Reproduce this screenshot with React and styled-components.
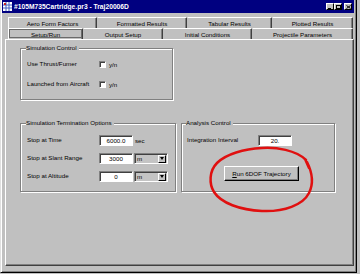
import React from 'react';
import styled, { createGlobalStyle } from 'styled-components';

const GlobalStyle = createGlobalStyle`
  html, body {
    margin: 0;
    padding: 0;
    background: #c0c0c0;
  }
  body {
    font-family: "Liberation Sans", Arial, sans-serif;
    font-size: 6.2px;
    color: #000;
  }
`

const Screen = styled.div`
  position: relative;
  width: 360px;
  height: 274px;
  overflow: hidden;
`

const Window = styled.div`
  width: 357px;
  height: 273px;
  box-sizing: border-box;
  background: #c0c0c0;
  border-left: 1px solid #dfdfdf;
  border-right: 1px solid #000;
  border-bottom: 1px solid #000;
  box-shadow: inset 1px 0 0 #fff, inset -1px -1px 0 #808080;
  padding: 0 2px 0 1px;
  display: flex;
  flex-direction: column;
`

const TitleBar = styled.div`
  height: 13px;
  flex: none;
  background: #000080;
  color: #fff;
  display: flex;
  align-items: center;
  padding: 0 2px 0 1px;
  gap: 2px;
`

const TitleText = styled.span`
  flex: 1;
  font-weight: bold;
  font-size: 6.7px;
  white-space: nowrap;
`

const CaptionButtons = styled.div`
  display: flex;
  align-items: center;
`

const CaptionButton = styled.div`
  width: 8px;
  height: 7px;
  box-sizing: border-box;
  background: #c0c0c0;
  border: 1px solid;
  border-color: #fff #000 #000 #fff;
  margin-left: ${p => p.$gap || 0}px;
  display: flex;
  align-items: center;
  justify-content: center;
`

const Body = styled.div`
  flex: 1;
  display: flex;
  flex-direction: column;
  padding: 4px 0 6px 3px;
`

const TabRow = styled.div`
  display: flex;
  margin-left: 3px;
  width: 345px;
`

const Tab = styled.div`
  width: ${p => p.$w}px;
  height: 11px;
  box-sizing: border-box;
  border-top: 1px solid #fff;
  border-left: 1px solid ${p => (p.$first ? '#fff' : '#c0c0c0')};
  border-right: 1px solid #404040;
  box-shadow: inset -1px 0 0 #808080;
  border-radius: 1px 1px 0 0;
  display: flex;
  align-items: center;
  justify-content: center;
  white-space: nowrap;
  ${p => p.$active && `
    border-left-color: #fff;
    outline: 1px solid #6a6a6a;
    outline-offset: -2px;
  `}
`

const Panel = styled.div`
  flex: 1;
  box-sizing: border-box;
  border: 1px solid;
  border-color: #fff #404040 #404040 #fff;
  box-shadow: inset -1px -1px 0 #808080;
  padding: 4px 0 0 14px;
  display: flex;
  flex-direction: column;
  gap: 19px;
`

const Group = styled.fieldset`
  margin: 0;
  width: ${p => p.$w}px;
  box-sizing: border-box;
  border: 1px solid #808080;
  box-shadow: inset 1px 1px 0 #fff, 1px 1px 0 #fff;
  padding: ${p => p.$pad};
  display: flex;
  flex-direction: column;
  gap: ${p => p.$gap || 0}px;
`

const Legend = styled.legend`
  padding: 0 2px 0 0;
  margin-left: -1px;
  line-height: 8px;
  background: #c0c0c0;
  white-space: nowrap;
`

const BottomRow = styled.div`
  display: flex;
  gap: 5px;
  align-items: stretch;
`

const Row = styled.div`
  display: flex;
  align-items: center;
  height: 11px;
`

const Label = styled.span`
  width: ${p => p.$w}px;
  flex: none;
  white-space: nowrap;
  margin-top: -2px;
`

const CheckBox = styled.span`
  width: 7px;
  height: 7px;
  box-sizing: border-box;
  background: #fff;
  border: 1px solid;
  border-color: #808080 #fff #fff #808080;
  box-shadow: inset 1px 1px 0 #404040;
`

const Hint = styled.span`
  margin-left: 3px;
`

const Field = styled.span`
  width: 34px;
  height: 11px;
  box-sizing: border-box;
  background: #fff;
  border: 1px solid;
  border-color: #808080 #fff #fff #808080;
  box-shadow: inset 1px 1px 0 #404040;
  display: flex;
  align-items: center;
  justify-content: center;
`

const Unit = styled.span`
  margin-left: 2px;
`

const Select = styled.span`
  width: 34px;
  height: 11px;
  margin-left: 1px;
  box-sizing: border-box;
  background: #c4c4c4;
  border: 1px solid;
  border-color: #808080 #fff #fff #808080;
  box-shadow: inset 1px 1px 0 #404040;
  display: flex;
  align-items: center;
  padding-left: 2px;
`

const SelectText = styled.span`
  flex: 1;
`

const DropButton = styled.span`
  width: 8px;
  height: 8px;
  box-sizing: border-box;
  margin-right: 1px;
  background: #c0c0c0;
  border: 1px solid;
  border-color: #fff #000 #000 #fff;
  display: flex;
  align-items: center;
  justify-content: center;
`

const Button = styled.div`
  align-self: flex-start;
  margin-left: 37px;
  margin-top: 20px;
  width: 75px;
  height: 15px;
  box-sizing: border-box;
  border: 1px solid;
  border-color: #fff #000 #000 #fff;
  box-shadow: inset -1px -1px 0 #808080;
  display: flex;
  align-items: center;
  justify-content: center;
  white-space: nowrap;
`

const Overlay = styled.svg`
  position: absolute;
  left: 0;
  top: 0;
  pointer-events: none;
`

const AppIcon = () => (
  <svg width="9" height="9" viewBox="0 0 9 9">
    <rect x="0" y="0" width="9" height="9" fill="#fff" />
    <path d="M0 3h9M0 6h9M3 0v9M6 0v9" stroke="#4060c0" strokeWidth="1" />
    <rect x="1" y="1" width="2" height="2" fill="#c02020" />
  </svg>
)

const Arrow = () => (
  <svg width="4" height="3" viewBox="0 0 4 3">
    <path d="M0 0h4L2 3z" fill="#000" />
  </svg>
)

const rowsBack = [
  ['Aero Form Factors', 89],
  ['Formatted Results', 90],
  ['Tabular Results', 85],
  ['Plotted Results', 81],
]

const rowsFront = [
  ['Setup/Run', 75],
  ['Output Setup', 80],
  ['Initial Conditions', 89],
  ['Projectile Parameters', 101],
]

const App = () => {
  return (
    <Screen>
      <GlobalStyle />
      <Window>
        <TitleBar>
          <AppIcon />
          <TitleText>#105M735Cartridge.pr3 - Traj20006D</TitleText>
          <CaptionButtons>
            <CaptionButton>
              <svg width="4" height="4" viewBox="0 0 4 4"><path d="M0 3.5h3" stroke="#000" /></svg>
            </CaptionButton>
            <CaptionButton>
              <svg width="5" height="4" viewBox="0 0 5 4"><rect x="0.5" y="0.5" width="4" height="3" fill="none" stroke="#000" /></svg>
            </CaptionButton>
            <CaptionButton $gap={2}>
              <svg width="5" height="4" viewBox="0 0 5 4"><path d="M0.5 0.5l4 3M4.5 0.5l-4 3" stroke="#000" /></svg>
            </CaptionButton>
          </CaptionButtons>
        </TitleBar>
        <Body>
          <TabRow>
            {rowsBack.map(([t, w], i) => (
              <Tab key={t} $w={w} $first={i === 0}>{t}</Tab>
            ))}
          </TabRow>
          <TabRow>
            {rowsFront.map(([t, w], i) => (
              <Tab key={t} $w={w} $first={i === 0} $active={i === 0}>{t}</Tab>
            ))}
          </TabRow>
          <Panel>
            <Group $w={153} $pad="7px 0 9px 6px" $gap={9}>
              <Legend>Simulation Control</Legend>
              <Row>
                <Label $w={72}>Use Thrust/Fumer</Label>
                <CheckBox />
                <Hint>y/n</Hint>
              </Row>
              <Row>
                <Label $w={72}>Launched from Aircraft</Label>
                <CheckBox />
                <Hint>y/n</Hint>
              </Row>
            </Group>
            <BottomRow>
              <Group $w={156} $pad="8px 0 9px 6px" $gap={7}>
                <Legend>Simulation Termination Options</Legend>
                <Row>
                  <Label $w={72}>Stop at Time</Label>
                  <Field>6000.0</Field>
                  <Unit>sec</Unit>
                </Row>
                <Row>
                  <Label $w={72}>Stop at Slant Range</Label>
                  <Field>3000</Field>
                  <Select>
                    <SelectText>m</SelectText>
                    <DropButton><Arrow /></DropButton>
                  </Select>
                </Row>
                <Row>
                  <Label $w={72}>Stop at Altitude</Label>
                  <Field>0</Field>
                  <Select>
                    <SelectText>m</SelectText>
                    <DropButton><Arrow /></DropButton>
                  </Select>
                </Row>
              </Group>
              <Group $w={154} $pad="8px 0 9px 5px">
                <Legend>Analysis Control</Legend>
                <Row>
                  <Label $w={71}>Integration Interval</Label>
                  <Field>20.</Field>
                </Row>
                <Button><span><u>R</u>un 6DOF Trajectory</span></Button>
              </Group>
            </BottomRow>
          </Panel>
        </Body>
      </Window>
      <Overlay width="360" height="274" viewBox="0 0 360 274">
        <path
          d="M306 160 C296 150 276 147 262 148 C244 149 226 154 217 163 C209 171 209 184 214 192 C221 203 240 210 262 211 C284 212 303 205 309 193 C314 183 312 172 307 162 M305 159 L309 168"
          fill="none"
          stroke="#e01010"
          strokeWidth="2.5"
          strokeLinecap="round"
        />
      </Overlay>
    </Screen>
  )
}

export default App
